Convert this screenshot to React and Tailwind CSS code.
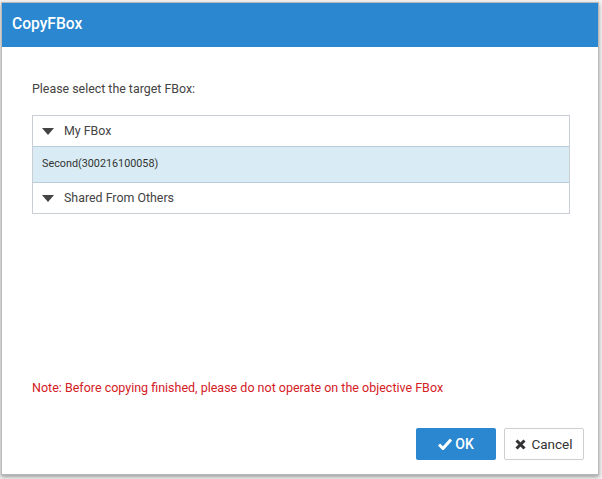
import { useState } from 'react';

const font = { fontFamily: 'Roboto, "Noto Sans", sans-serif' };

function Caret() {
  return (
    <svg width="12" height="7" viewBox="0 0 12 7" className="shrink-0">
      <path d="M0 0 L12 0 L6 7 Z" fill="#444" />
    </svg>
  );
}

function Check() {
  return (
    <svg width="14" height="12" viewBox="0 0 14 12">
      <path d="M1 6.5 L5 10.5 L13 1.5" stroke="#fff" strokeWidth="3" fill="none" />
    </svg>
  );
}

function Cross() {
  return (
    <svg width="11" height="11" viewBox="0 0 11 11">
      <path d="M1.5 1.5 L9.5 9.5 M9.5 1.5 L1.5 9.5" stroke="#333" strokeWidth="3" fill="none" />
    </svg>
  );
}

export default function App() {
  const [selected, setSelected] = useState('second');
  return (
    <div className="w-[602px] h-[479px] bg-[#f2f2f2] overflow-hidden pt-[2px] pl-[1px]" style={font}>
      <div className="w-[598px] h-[473px] bg-white border border-[#b9b9b9] shadow-[0_2px_4px_rgba(0,0,0,0.35)] flex flex-col">
        <div className="h-[44px] bg-[#2a87d0] flex items-center pl-[10px]">
          <h1 className="text-white text-[15.6px] font-medium">CopyFBox</h1>
        </div>
        <div className="flex-1 flex flex-col px-[30px]">
          <p className="text-[12.4px] text-[#444] mt-[34px] leading-[16px]">Please select the target FBox:</p>
          <div className="mt-[18px] w-[538px] border border-[#c8ced4]">
            <div className="h-[30px] flex items-center gap-[10px] pl-[9px] text-[12.4px] text-[#444]">
              <Caret />
              <span>My FBox</span>
            </div>
            <div
              onClick={() => setSelected('second')}
              className={`h-[37px] flex items-center pl-[9px] text-[10.8px] text-[#333] border-y border-[#b8cdd9] ${
                selected === 'second' ? 'bg-[#d9ecf5]' : 'bg-white'
              }`}
            >
              Second(300216100058)
            </div>
            <div className="h-[30px] flex items-center gap-[10px] pl-[9px] text-[12.4px] text-[#444]">
              <Caret />
              <span>Shared From Others</span>
            </div>
          </div>
          <p className="mt-[166px] text-[12.5px] text-[#d4201f] leading-[16px]">
            Note: Before copying finished, please do not operate on the objective FBox
          </p>
          <div className="mt-[32px] flex justify-end gap-[8px] mr-[-16px]">
            <button className="w-[80px] h-[32px] bg-[#2a87d0] text-white text-[14px] rounded-[2px] flex items-center justify-center gap-[3px] font-medium">
              <Check />
              OK
            </button>
            <button className="w-[80px] h-[32px] bg-white border border-[#cfcfcf] text-[#333] text-[13.5px] rounded-[2px] flex items-center justify-center gap-[5px]">
              <Cross />
              Cancel
            </button>
          </div>
        </div>
      </div>
    </div>
  );
}
